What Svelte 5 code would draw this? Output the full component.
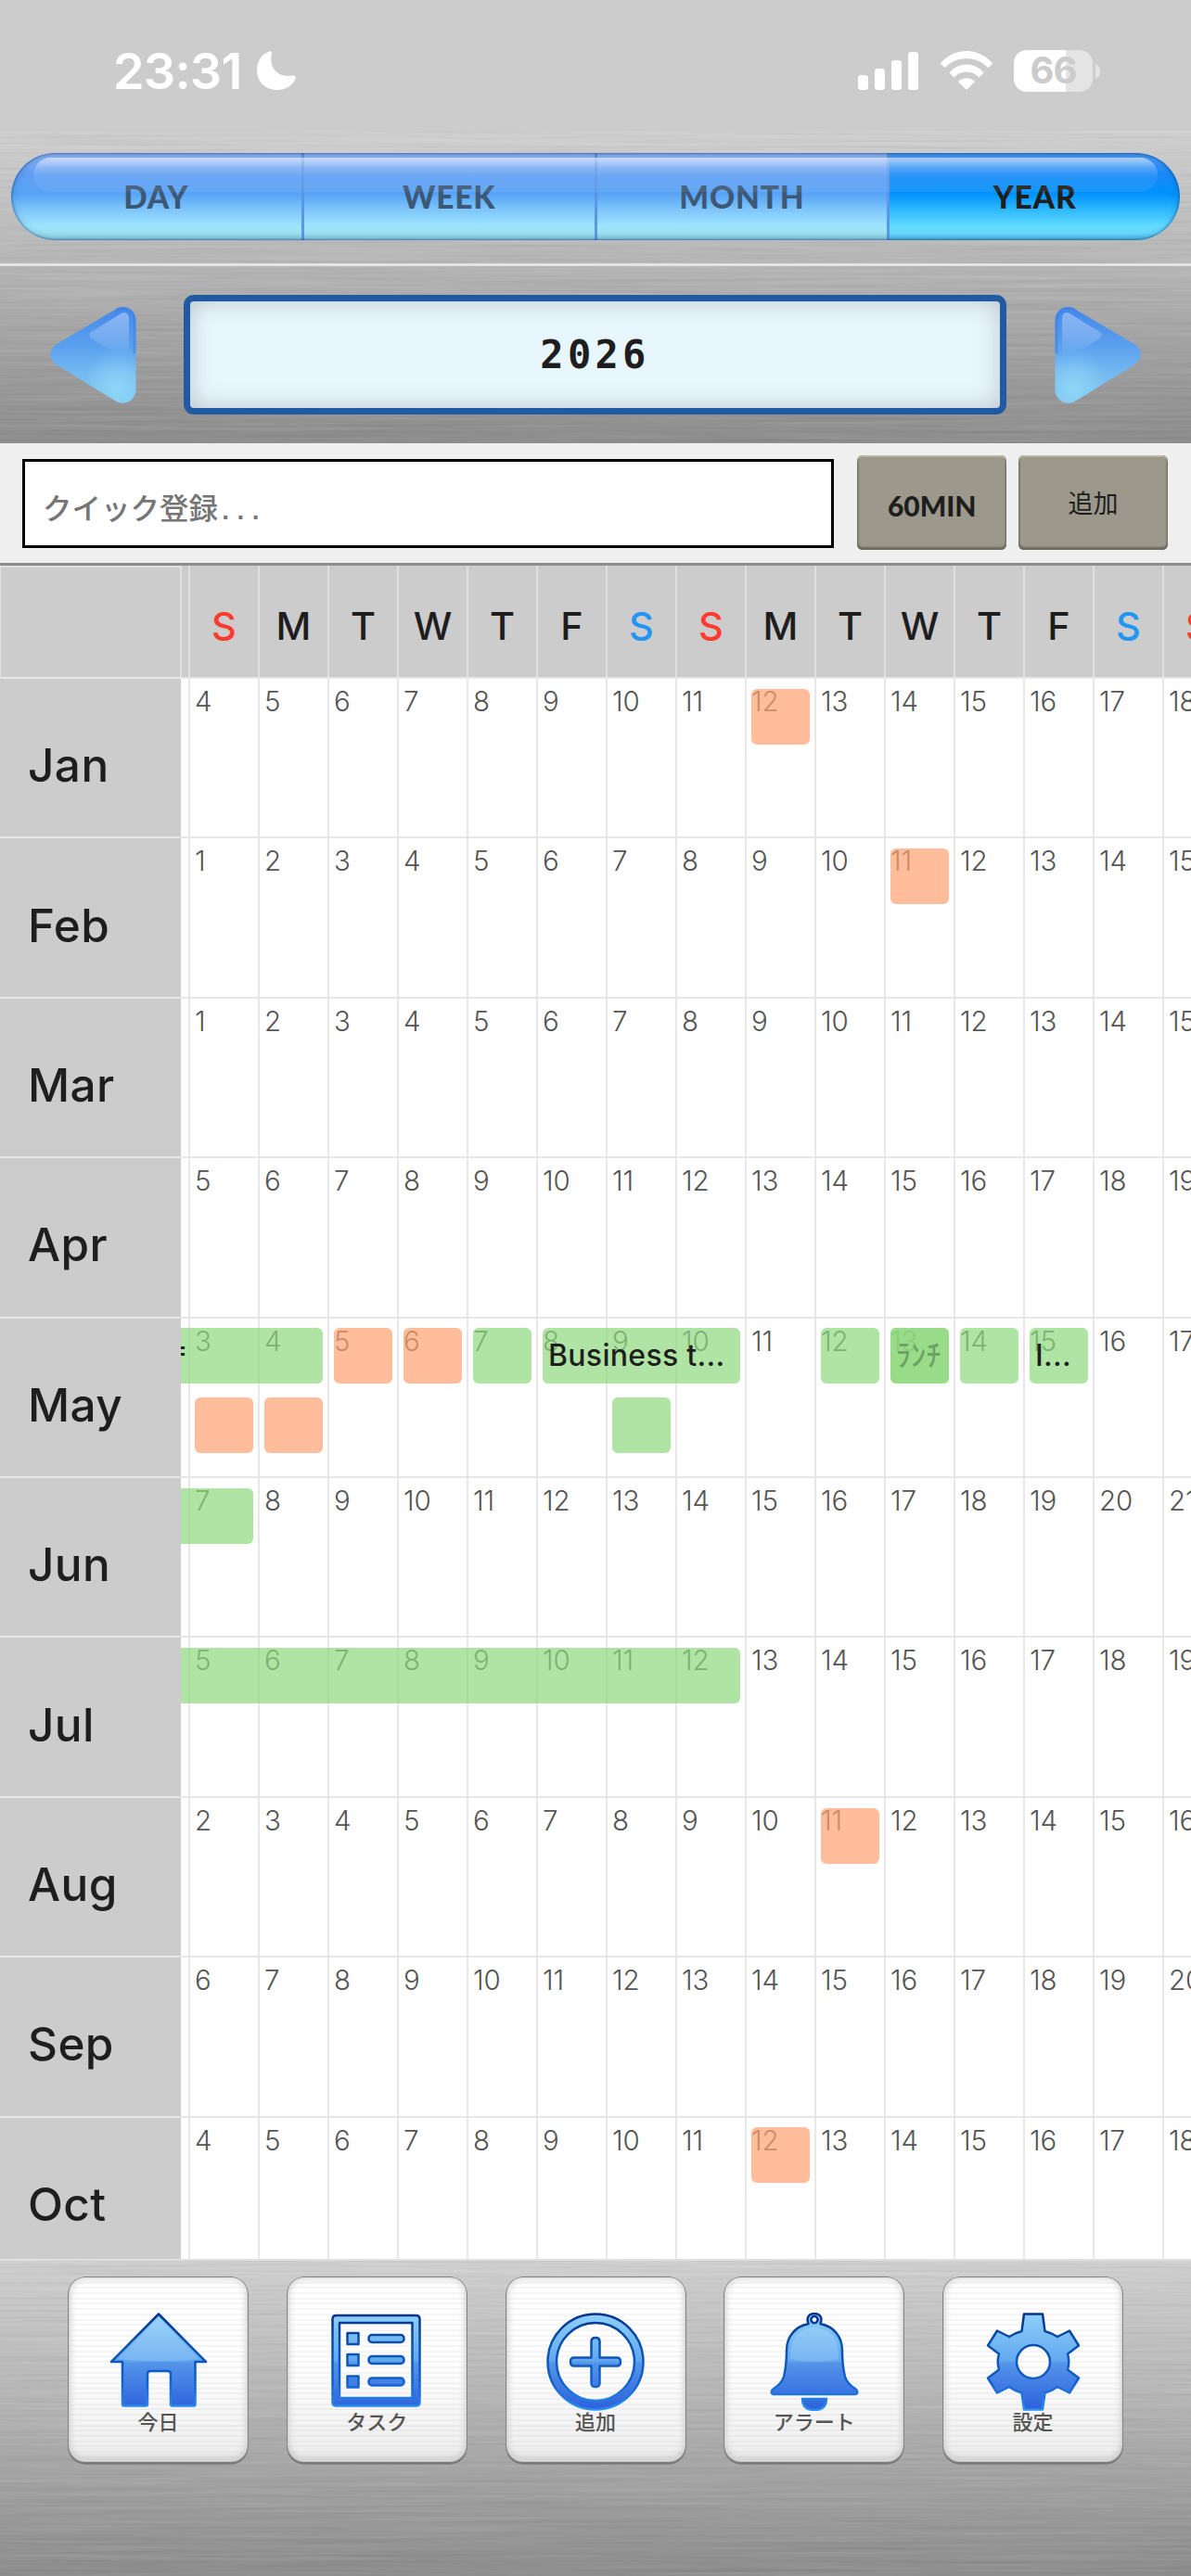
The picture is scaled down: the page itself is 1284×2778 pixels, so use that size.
<script lang="ts">
  type Tint = 'orange' | 'green';
  type Event = { col: number; span?: number; lane?: number; tint: Tint; title?: string; cut?: boolean };
  type Month = { name: string; first: number; events?: Event[] };

  const views = ['DAY', 'WEEK', 'MONTH', 'YEAR'];
  const active = 'YEAR';

  const columns = Array.from({ length: 15 }, (_, i) => i);
  const letters = ['S', 'M', 'T', 'W', 'T', 'F', 'S'];

  // first = day number shown in the first visible column
  const months: Month[] = [
    { name: 'Jan', first: 4, events: [{ col: 8, tint: 'orange' }] },
    { name: 'Feb', first: 1, events: [{ col: 10, tint: 'orange' }] },
    { name: 'Mar', first: 1 },
    { name: 'Apr', first: 5 },
    {
      name: 'May',
      first: 3,
      events: [
        { col: -1, span: 3, tint: 'green', title: '=', cut: true },
        { col: 2, tint: 'orange' },
        { col: 3, tint: 'orange' },
        { col: 4, tint: 'green' },
        { col: 5, span: 3, tint: 'green', title: 'Business t...' },
        { col: 9, tint: 'green' },
        { col: 10, tint: 'green', title: 'ﾗﾝﾁ' },
        { col: 10, tint: 'green' },
        { col: 11, tint: 'green' },
        { col: 12, tint: 'green', title: 'I...' },
        { col: 0, lane: 1, tint: 'orange' },
        { col: 1, lane: 1, tint: 'orange' },
        { col: 6, lane: 1, tint: 'green' },
      ],
    },
    { name: 'Jun', first: 7, events: [{ col: -1, span: 2, tint: 'green' }] },
    { name: 'Jul', first: 5, events: [{ col: -1, span: 9, tint: 'green' }] },
    { name: 'Aug', first: 2, events: [{ col: 9, tint: 'orange' }] },
    { name: 'Sep', first: 6 },
    { name: 'Oct', first: 4, events: [{ col: 8, tint: 'orange' }] },
  ];

  const tabs = [
    { icon: 'home', label: '今日' },
    { icon: 'list', label: 'タスク' },
    { icon: 'plus', label: '追加' },
    { icon: 'bell', label: 'アラート' },
    { icon: 'gear', label: '設定' },
  ];

  const COL = 75;
</script>

{#snippet brushed()}
  <svg class="brushed" aria-hidden="true">
    <filter id="brush" x="0" y="0" width="100%" height="100%">
      <feTurbulence type="fractalNoise" baseFrequency="0.004 0.3" numOctaves="3" seed="7" />
      <feColorMatrix values="0 0 0 0 0  0 0 0 0 0  0 0 0 0 0  1.6 0 0 0 -0.68" />
    </filter>
    <filter id="shine" x="0" y="0" width="100%" height="100%">
      <feTurbulence type="fractalNoise" baseFrequency="0.005 0.25" numOctaves="3" seed="21" />
      <feColorMatrix values="0 0 0 0 1  0 0 0 0 1  0 0 0 0 1  1.6 0 0 0 -0.68" />
    </filter>
    <rect width="100%" height="100%" filter="url(#brush)" opacity="0.08" />
    <rect width="100%" height="100%" filter="url(#shine)" opacity="0.12" />
  </svg>
{/snippet}

{#snippet arrow(flip: boolean)}
  <svg class="arrow" class:flip viewBox="0 0 93 104">
    <path
      d="M70 3 C80 -4 92.500 3 92.500 15 V89 C92.500 101 80 107.500 70 101 L7 62.500 C-2 56 -2 46 7 40 Z"
      fill="url(#tri)"
    />
    <path
      d="M70 3 C80 -4 92.500 3 92.500 15 V89 C92.500 101 80 107.500 70 101 L7 62.500 C-2 56 -2 46 7 40 Z"
      fill="url(#triGlow)"
    />
    <path d="M71 3.500 C80 -2 91 3 91 15 V50" fill="none" stroke="#3b82e8" stroke-opacity=".55" stroke-width="3" />
    <path d="M75 8 C80 4 85 6 85 13 V52 C72 50 56 43 45 34 C41 31 42 28 46 26 Z" fill="url(#triShine)" />
  </svg>
{/snippet}

<svg class="defs" aria-hidden="true">
  <linearGradient id="tri" x1="0" y1="0" x2="0" y2="1">
    <stop offset="0" stop-color="#4587ea" />
    <stop offset=".4" stop-color="#5ba0ee" />
    <stop offset=".7" stop-color="#74baf1" />
    <stop offset="1" stop-color="#7fc6f3" />
  </linearGradient>
  <radialGradient id="triGlow" cx=".78" cy=".84" r=".4">
    <stop offset="0" stop-color="#93dbf8" stop-opacity=".8" />
    <stop offset="1" stop-color="#93dbf8" stop-opacity="0" />
  </radialGradient>
  <linearGradient id="triShine" x1="0" y1="0" x2="0" y2="1">
    <stop offset="0" stop-color="#fff" stop-opacity=".36" />
    <stop offset=".6" stop-color="#fff" stop-opacity=".18" />
    <stop offset="1" stop-color="#fff" stop-opacity="0" />
  </linearGradient>
  <linearGradient id="fill" gradientUnits="userSpaceOnUse" x1="0" y1="0" x2="0" y2="106">
    <stop offset="0" stop-color="#8fd0fa" />
    <stop offset=".49" stop-color="#62a8f0" />
    <stop offset=".51" stop-color="#5495ea" />
    <stop offset="1" stop-color="#2b5fdb" />
  </linearGradient>
  <linearGradient id="edge" gradientUnits="userSpaceOnUse" x1="0" y1="0" x2="0" y2="106">
    <stop offset="0" stop-color="#06308c" />
    <stop offset=".3" stop-color="#0a4fa8" />
    <stop offset=".7" stop-color="#1260cc" />
    <stop offset="1" stop-color="#2a92f0" />
  </linearGradient>
</svg>

<div class="app">
  <div class="status">
    <span class="clock">23:31</span>
    <svg class="moon" viewBox="0 0 42 42">
      <path d="M13.500 .6 C15.500 -.2 16.800 1 16 3 C12.500 16 21 29.500 38 26.500 C41 26 42.500 27.500 41.500 30 C38 38 30 42 22 42 C9 42 0 33 0 21 C0 11 5 3.500 13.500 .6 Z" />
    </svg>
    <svg class="signal" viewBox="0 0 65 41">
      <rect x="0" y="25" width="11" height="16" rx="3" />
      <rect x="18" y="18" width="11" height="23" rx="3" />
      <rect x="36" y="9" width="11" height="32" rx="3" />
      <rect x="54" y="0" width="11" height="41" rx="3" />
    </svg>
    <svg class="wifi" viewBox="0 0 58 42">
      <path d="M.8 13.500 C16 -4.500 42 -4.500 57.200 13.500 L52.500 18.300 C40 4.500 18 4.500 5.500 18.300 Z" />
      <path d="M10.500 23.500 C20 11.500 38 11.500 47.500 23.500 L42.500 28.500 C35.500 20.500 22.500 20.500 15.500 28.500 Z" />
      <path d="M20 33 C25 28 33 28 38 33 L29 42 Z" />
    </svg>
    <div class="battery"><span>66</span></div>
  </div>

  <header>
    {@render brushed()}
    <div class="views">
      <div class="segments">
        {#each views as view}
          <button class="segment" class:active={view === active}>{view}</button>
        {/each}
      </div>
    </div>
    <div class="pager">
      {@render arrow(false)}
      <div class="year">2026</div>
      {@render arrow(true)}
    </div>
  </header>

  <div class="quick">
    <div class="entry">クイック登録<span>...</span></div>
    <button class="key latin">60MIN</button>
    <button class="key">追加</button>
  </div>

  <main>
    <div class="week">
      <div class="corner"></div>
      <div class="cells">
        {#each columns as i}
          <div class="letter" class:sun={i % 7 === 0} class:sat={i % 7 === 6}>{letters[i % 7]}</div>
        {/each}
      </div>
    </div>
    {#each months as month}
      <div class="month">
        <div class="name">{month.name}</div>
        <div class="cells">
          {#each columns as i}
            <div class="day">{month.first + i}</div>
          {/each}
          {#each month.events ?? [] as e}
            <div
              class="event {e.tint}"
              class:lower={e.lane === 1}
              class:cut={e.cut}
              style:left="{15 + e.col * COL}px"
              style:width="{(e.span ?? 1) * COL - 12}px"
            >
              {e.title ?? ''}
            </div>
          {/each}
        </div>
      </div>
    {/each}
  </main>

  <footer>
    {@render brushed()}
    {#each tabs as tab}
      <button class="tab">
        <svg viewBox="0 0 106 106" fill="url(#fill)" stroke="url(#edge)" stroke-width="2.500" stroke-linejoin="round">
          {#if tab.icon === 'home'}
            <path d="M53 1.500 L104 53 H92.500 V99 Q92.500 100.500 91 100.500 H67.500 Q66 100.500 66 99 V66 Q66 63 63 63 H44 Q41 63 41 66 V99 Q41 100.500 39.500 100.500 H15.500 Q14 100.500 14 99 V53 H2 Z" />
            <path d="M53 6 L97 50 C70 53 36 53 9 50 Z" fill="#fff" fill-opacity=".14" stroke="none" />
          {:else if tab.icon === 'list'}
            <path fill-rule="evenodd" d="M9.500 3 H95.500 Q99.500 3 99.500 7 V96.500 Q99.500 100.500 95.500 100.500 H9.500 Q5.500 100.500 5.500 96.500 V7 Q5.500 3 9.500 3 Z M13 11 V92 H91.500 V11 Z" />
            {#each [22, 45, 68.5] as y}
              <rect x="21.500" {y} width="12" height="12" />
              <rect x="44.500" y={y + 2} width="38" height="8" rx="3.500" />
            {/each}
          {:else if tab.icon === 'plus'}
            <path fill-rule="evenodd" d="M53 1.500 A51.500 51.500 0 1 1 53 104.500 A51.500 51.500 0 1 1 53 1.500 Z M53 11 A42 42 0 1 0 53 95 A42 42 0 1 0 53 11 Z" />
            <path d="M48.500 31 Q48.500 27 53 27 Q57.500 27 57.500 31 V48.500 H76 Q80 48.500 80 53 Q80 57.500 76 57.500 H57.500 V76 Q57.500 80 53 80 Q48.500 80 48.500 76 V57.500 H30 Q26 57.500 26 53 Q26 48.500 30 48.500 H48.500 Z" />
          {:else if tab.icon === 'bell'}
            <path
              fill-rule="evenodd"
              d="M46.500 12 C44 5 47 1 53 1 C59 1 62 5 59.500 12 C74 15 83 26 83 41 C83 54 84 61 86 69 C88 76 92 79 97 82 Q100 84 99 87 Q98.500 88 97 88 H9 Q7.500 88 7 87 Q6 84 9 82 C14 79 18 76 20 69 C22 61 23 54 23 41 C23 26 32 15 46.500 12 Z M53 4 A3.600 3.600 0 1 0 53 11.200 A3.600 3.600 0 1 0 53 4 Z"
            />
            <path d="M40 93 H66 Q66 105 53 105 Q40 105 40 93 Z" />
            <path d="M27 50 C27 28 34 18 53 16 C72 18 79 28 79 50 C62 54 44 54 27 50 Z" fill="#fff" fill-opacity=".14" stroke="none" />
          {:else}
            <path
              fill-rule="evenodd"
              d="M43 1.500 H63 L65.500 20 Q73 22 79 26 L92 19.500 L102 35.500 L90 44.500 Q92.500 53 90 61.500 L102 70.500 L92 86.500 L79 80 Q73 84.500 65.500 86.500 L63 104.500 H43 L40.500 86.500 Q33 84.500 27 80 L14 86.500 L4 70.500 L16 61.500 Q13.500 53 16 44.500 L4 35.500 L14 19.500 L27 26 Q33 22 40.500 20 Z M53 35 A18 18 0 1 0 53 71 A18 18 0 1 0 53 35 Z"
            />
          {/if}
        </svg>
        <span>{tab.label}</span>
      </button>
    {/each}
  </footer>
</div>

<style>
  :global(body) {
    background: #ccc;
  }

  button {
    border: 0;
    padding: 0;
    font: inherit;
    color: inherit;
  }

  .defs {
    position: absolute;
    width: 0;
    height: 0;
  }

  .app {
    width: 1284px;
    height: 2778px;
    display: flex;
    flex-direction: column;
    overflow: hidden;
    color: #1e1e1e;
    font-family: Inter, 'Noto Sans CJK JP', sans-serif;
  }

  /* status bar */
  .status {
    flex: none;
    height: 141px;
    box-sizing: border-box;
    padding: 11px 97px 0 122px;
    display: flex;
    align-items: center;
    background: #ccc;
    color: #fff;
    fill: #fff;
  }

  .clock {
    width: 155px;
    font-size: 54px;
    font-weight: 600;
    letter-spacing: -0.8px;
    white-space: nowrap;
  }

  .moon {
    width: 42px;
    height: 42px;
    margin-right: auto;
  }

  .signal {
    width: 65px;
    height: 41px;
    margin-right: 23px;
  }

  .wifi {
    width: 58px;
    height: 42px;
    margin-right: 22px;
  }

  .battery {
    position: relative;
    width: 85px;
    height: 45px;
    margin-right: 9px;
    border-radius: 14px;
    display: grid;
    place-items: center;
    background: linear-gradient(90deg, #fff 56px, #e4e4e4 56px);
    color: #ccc;
    font-size: 40px;
    font-weight: 700;
    letter-spacing: -1px;
    line-height: 1;
  }

  .battery::after {
    content: '';
    position: absolute;
    left: 88px;
    top: 16px;
    width: 5px;
    height: 14px;
    border-radius: 0 6px 6px 0;
    background: #e4e4e4;
  }

  /* brushed metal */
  header,
  footer {
    position: relative;
    flex: none;
    background: linear-gradient(#d0d0d0, #b6b6b6 42%, #8d8d8d);
  }

  .brushed {
    position: absolute;
    inset: 0;
    width: 100%;
    height: 100%;
  }

  header {
    height: 337px;
  }

  .views {
    position: relative;
    height: 146px;
    box-sizing: border-box;
    padding: 24px 12px 0;
    border-bottom: 3px solid #e4e4e4;
  }

  .segments {
    position: relative;
    height: 94px;
    display: flex;
    border-radius: 47px;
    overflow: hidden;
  }

  .segments::before {
    content: '';
    position: absolute;
    z-index: 1;
    inset: 5px 24px auto;
    height: 37px;
    border-radius: 24px;
    background: linear-gradient(rgba(255, 255, 255, 0.56), rgba(255, 255, 255, 0.2) 30%, rgba(255, 255, 255, 0.07) 60%, rgba(255, 255, 255, 0.07));
  }

  .segments::after {
    content: '';
    position: absolute;
    inset: 0;
    border-radius: 47px;
    box-shadow:
      inset 0 0 2px 1px rgba(20, 70, 130, 0.5),
      inset 0 0 9px rgba(20, 60, 120, 0.3);
  }

  .segment {
    flex: 1;
    background: linear-gradient(#8fb0f0, #80adf5 8%, #5f9ff4 24%, #58a3f5 47%, #7cc4fa 64%, #9ee4fe 84%, #9be0f0 92%, #86c8de);
    color: #3c5876;
    font-family: Lato, sans-serif;
    font-size: 33.500px;
    font-weight: 900;
    letter-spacing: 0.8px;
  }

  .segment:not(.active) {
    border-right: 3px solid #5b95e6;
  }

  .segment.active {
    background: linear-gradient(#3d92ee, #3f97f5 8%, #1888f8 24%, #0092fb 47%, #2bb6fe 64%, #62dcff 84%, #69d8f8 92%, #40b4e4);
    color: #1e1e1e;
  }

  .pager {
    position: relative;
    height: 191px;
    box-sizing: border-box;
    padding: 1px 54px 0;
    display: flex;
    align-items: center;
    justify-content: space-between;
  }

  .arrow {
    width: 93px;
    height: 104px;
  }

  .flip {
    transform: scaleX(-1);
  }

  .year {
    width: 887px;
    height: 129px;
    box-sizing: border-box;
    margin: -1px 1px 0 0;
    border: 7px solid #2159a3;
    border-radius: 11px;
    display: grid;
    place-items: center;
    background: #e8f7fe;
    box-shadow: inset 0 0 26px rgba(90, 90, 90, 0.32);
    font-family: 'DejaVu Sans Mono', monospace;
    font-size: 42px;
    font-weight: 700;
    letter-spacing: 4.3px;
  }

  /* quick entry */
  .quick {
    flex: none;
    height: 132px;
    box-sizing: border-box;
    padding: 1px 25px 3px 24px;
    display: flex;
    align-items: center;
    background: #efefef;
    border-bottom: 3px solid #8c8c8c;
  }

  .entry {
    width: 876px;
    height: 96px;
    box-sizing: border-box;
    margin: 2px 25px 0 0;
    padding-left: 19px;
    border: 3px solid #000;
    background: #fff;
    color: #757575;
    font-family: 'Noto Sans CJK JP', sans-serif;
    font-size: 31.500px;
    font-weight: 500;
    line-height: 96px;
  }

  .entry span {
    font-family: 'Liberation Mono', monospace;
    font-size: 27px;
    font-weight: 700;
  }

  .key {
    width: 161px;
    height: 102px;
    border-radius: 6px;
    background: #9c988b;
    box-shadow:
      inset 0 2px 1px #bcb9a6,
      inset 0 -3px 2px #6d6a60,
      inset 0 0 2px 1px #5c5a50;
    font-size: 27px;
  }

  .key + .key {
    margin-left: 13px;
  }

  .latin {
    padding-top: 6px;
    font-family: Lato, sans-serif;
    font-size: 30px;
    font-weight: 900;
  }

  /* year grid */
  main {
    flex: 1;
    min-height: 0;
    overflow: hidden;
    background: #fff;
  }

  .week,
  .month {
    display: flex;
  }

  .week {
    height: 120px;
    background: #ccc;
  }

  .corner {
    flex: none;
    width: 196px;
    box-sizing: border-box;
    border: solid #e0e0e0;
    border-width: 2px 2px 0 1px;
  }

  .cells {
    position: relative;
    flex: 1;
    min-width: 0;
    padding-left: 8px;
    display: flex;
    overflow: hidden;
  }

  .week .cells {
    padding-left: 7px;
  }

  .letter,
  .day {
    flex: none;
    width: 75px;
    box-sizing: border-box;
    border-left: 2px solid #e8e8e8;
  }

  .letter {
    padding-top: 10px;
    border-color: #e0e0e0;
    display: grid;
    place-items: center;
    font-size: 41.500px;
    font-weight: 550;
  }

  .sun {
    color: #ff3b30;
  }

  .sat {
    color: #2196f3;
  }

  .month {
    height: 172.4px;
    box-sizing: border-box;
    border-top: 2px solid #e6e6e6;
  }

  .name {
    flex: none;
    width: 195px;
    box-sizing: border-box;
    padding: 16px 0 0 30px;
    display: flex;
    align-items: center;
    background: #ccc;
    font-size: 49.500px;
    font-weight: 500;
    letter-spacing: 0.4px;
  }

  .day {
    padding: 7px 0 0 5px;
    color: #555;
    font-size: 29.500px;
    font-weight: 350;
    line-height: 34px;
  }

  .event {
    position: absolute;
    top: 10.8px;
    height: 60px;
    box-sizing: border-box;
    padding-left: 6px;
    border-radius: 6px;
    font-size: 32px;
    font-weight: 500;
    letter-spacing: 0.3px;
    line-height: 60px;
    white-space: nowrap;
  }

  .lower {
    top: 85.8px;
  }

  .cut {
    padding-left: 46px;
    line-height: 46px;
  }

  .orange {
    background: rgba(255, 161, 112, 0.7);
  }

  .green {
    background: rgba(142, 216, 125, 0.7);
  }

  /* tab bar */
  footer {
    height: 342px;
    box-sizing: border-box;
    padding: 17px 73px 0;
    border-top: 2px solid #e0e0e0;
    display: flex;
    align-items: flex-start;
    justify-content: space-between;
  }

  .tab {
    position: relative;
    width: 195px;
    height: 203px;
    padding-top: 39px;
    border-radius: 19px;
    display: flex;
    flex-direction: column;
    align-items: center;
    background:
      repeating-linear-gradient(rgba(0, 0, 0, 0.035) 0 2px, transparent 2px 5.7px),
      linear-gradient(#fff, #fdfdfd 50%, #ececec);
    box-shadow:
      inset 0 0 0 1px #858585,
      inset 0 -2px 1px 1px #777,
      inset 0 -9px 5px #d4d4d4,
      inset 0 0 9px 2px #d0d0d0;
    color: #555;
    font-size: 22px;
    font-weight: 500;
    line-height: 24px;
  }

  .tab svg {
    width: 106px;
    height: 106px;
  }
</style>
